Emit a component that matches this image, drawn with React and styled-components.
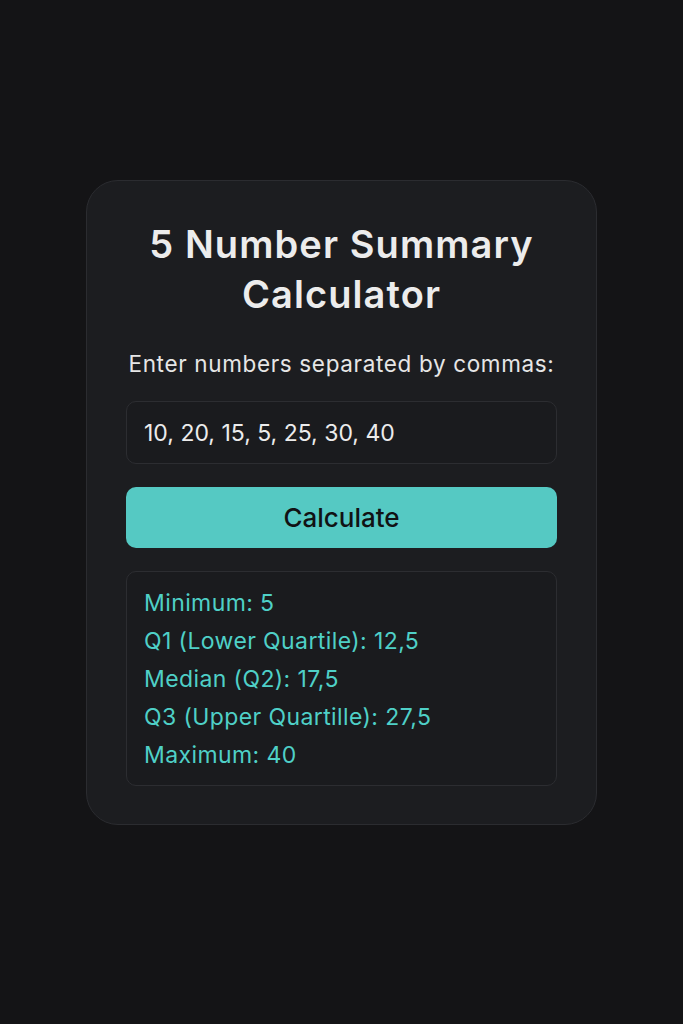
import React, { useState } from "react";
import styled, { createGlobalStyle } from "styled-components";

const GlobalStyle = createGlobalStyle`
  html, body {
    margin: 0;
    padding: 0;
    background: #141416;
  }
  body {
    font-family: Inter, "Noto Sans", sans-serif;
    -webkit-font-smoothing: antialiased;
  }
`;

const Page = styled.main`
  min-height: 1024px;
  display: flex;
  justify-content: center;
  align-items: flex-start;
  padding-top: 180px;
  box-sizing: border-box;
`;

const Card = styled.section`
  width: 511px;
  box-sizing: border-box;
  padding: 38px 39px 38px;
  background: #1c1d20;
  border: 1.5px solid #2b2c30;
  border-radius: 32px;
  display: flex;
  flex-direction: column;
`;

const Title = styled.h1`
  margin: 0;
  text-align: center;
  color: #ececec;
  font-size: 38px;
  font-weight: 600;
  line-height: 50px;
  letter-spacing: 1.1px;
`;

const Label = styled.label`
  margin-top: 30px;
  color: #e6e6e6;
  font-size: 22.5px;
  line-height: 30px;
  letter-spacing: 0.65px;
  text-align: center;
`;

const Input = styled.input`
  margin-top: 22px;
  height: 63px;
  box-sizing: border-box;
  padding: 0 17px;
  background: #1a1b1e;
  border: 1.5px solid #2c2d31;
  border-radius: 10px;
  color: #ececec;
  font-family: inherit;
  font-size: 23px;
  outline: none;
`;

const Button = styled.button`
  margin-top: 23px;
  height: 61px;
  border: none;
  border-radius: 10px;
  background: #55c9c3;
  color: #111214;
  font-family: inherit;
  font-size: 26px;
  font-weight: 500;
  cursor: pointer;
`;

const Results = styled.div`
  margin-top: 23px;
  box-sizing: border-box;
  padding: 12px 17px 11px;
  border: 1.5px solid #2c2d31;
  border-radius: 10px;
  background: #1a1b1e;
  display: flex;
  flex-direction: column;
`;

const ResultLine = styled.div`
  color: #4fd0c7;
  font-size: 23px;
  line-height: 38px;
  letter-spacing: 0.4px;
`;

const stats = [
  "Minimum: 5",
  "Q1 (Lower Quartile): 12,5",
  "Median (Q2): 17,5",
  "Q3 (Upper Quartille): 27,5",
  "Maximum: 40",
];

export default function App() {
  const [value, setValue] = useState("10, 20, 15, 5, 25, 30, 40");
  return (
    <>
      <GlobalStyle />
      <Page>
        <Card>
          <Title>
            5 Number Summary
            <br />
            Calculator
          </Title>
          <Label htmlFor="nums">Enter numbers separated by commas:</Label>
          <Input id="nums" value={value} onChange={(e) => setValue(e.target.value)} />
          <Button type="button">Calculate</Button>
          <Results>
            {stats.map((s) => (
              <ResultLine key={s}>{s}</ResultLine>
            ))}
          </Results>
        </Card>
      </Page>
    </>
  );
}
